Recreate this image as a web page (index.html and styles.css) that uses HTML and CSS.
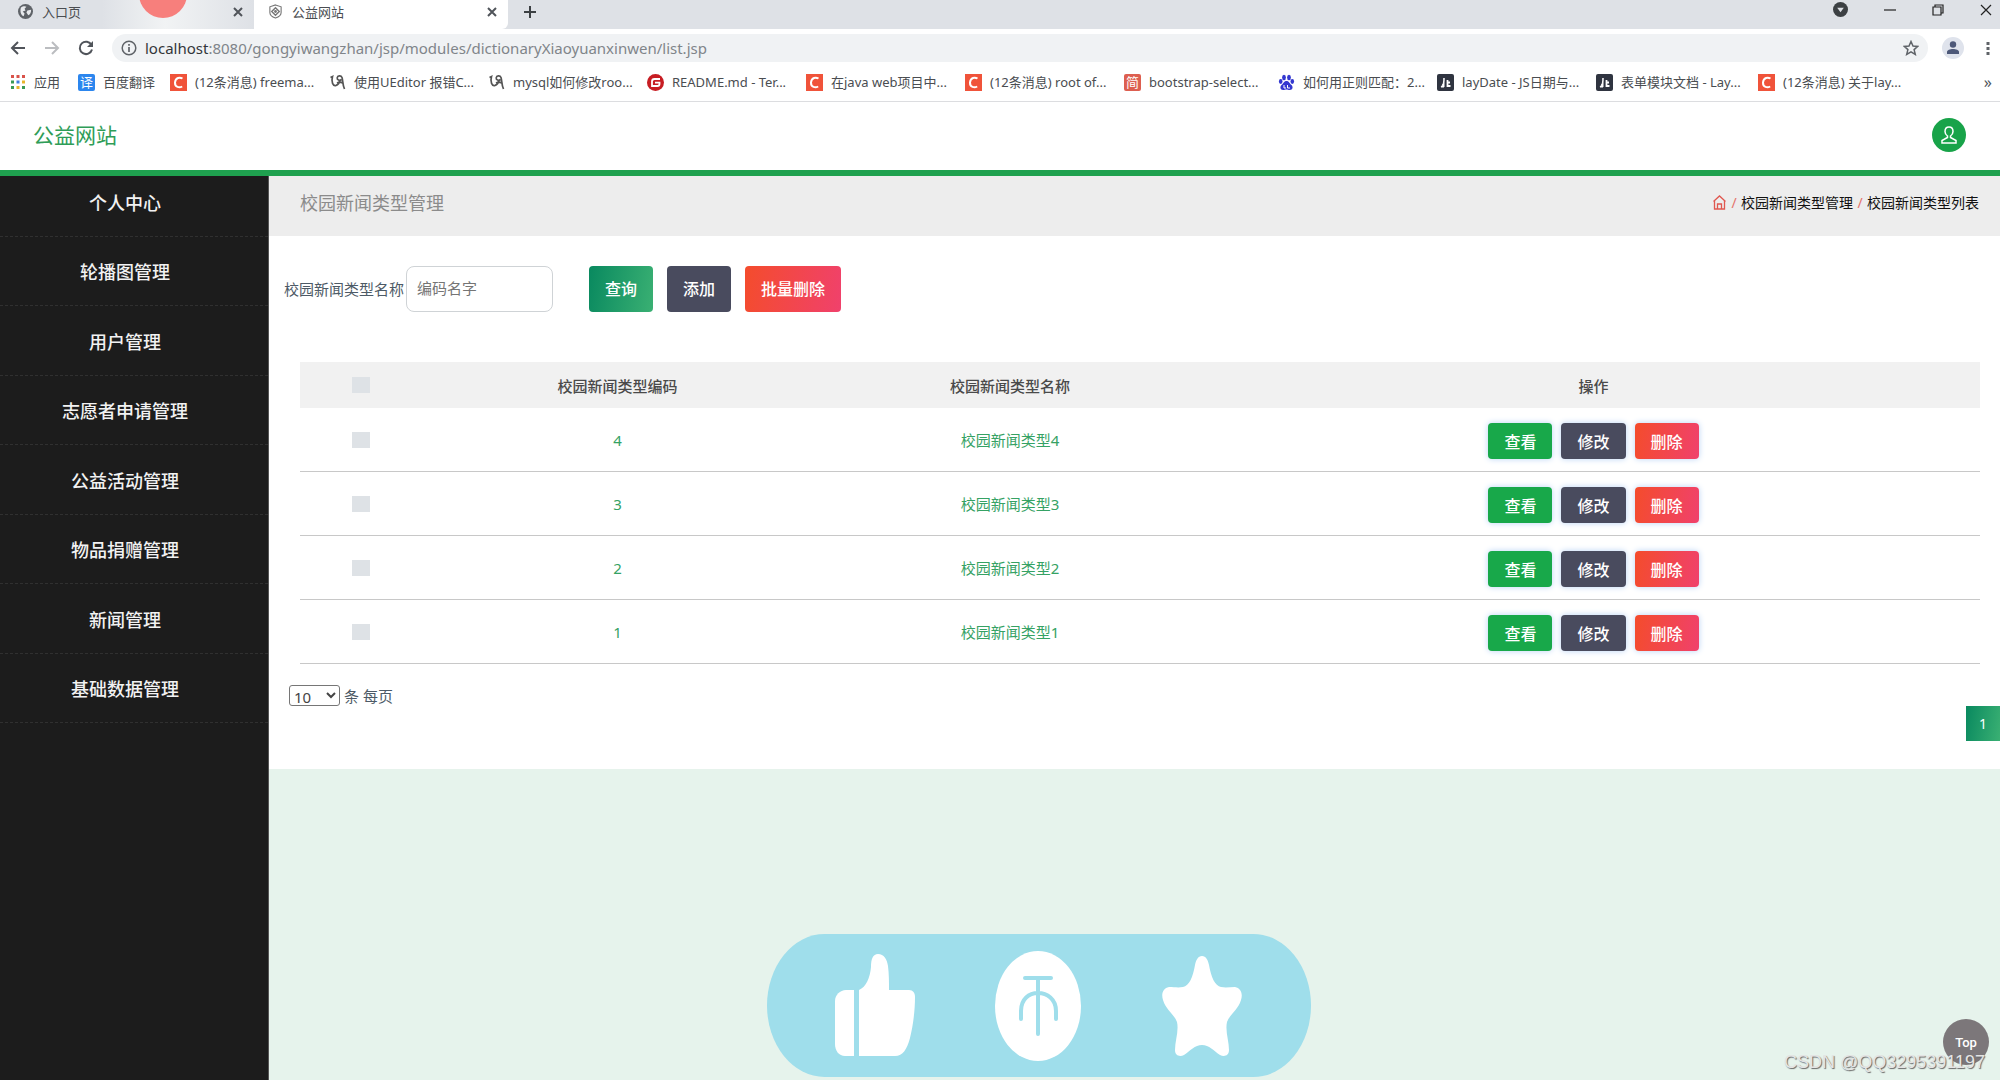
FILE: index.html
```html
<!DOCTYPE html>
<html lang="zh-CN">
<head>
<meta charset="utf-8">
<title>公益网站</title>
<link rel="stylesheet" href="styles.css">
</head>
<body>
<svg class="defs" aria-hidden="true">
  <symbol id="close" viewBox="0 0 12 12"><path d="M2 2l8 8M10 2l-8 8" fill="none" stroke="currentColor" stroke-width="2"/></symbol>
  <symbol id="csdn" viewBox="0 0 17 17"><path fill="#f0533a" d="M0 0h17v17H0z"/><path d="M12.500 4.500C10 3 5.500 3.200 5 8.500c-.2 5 4.500 5.500 7.200 4" fill="none" stroke="#fff" stroke-width="2"/></symbol>
  <symbol id="swirl" viewBox="0 0 17 17"><path d="M1.500 3.500l2-1C2 8 4 12.500 7 11.500c2.500-1 3.500-3 4-5M12.500 5.500c-2 1.500-4.500.5-4.300-1.700C8.500 1.500 12 1 13 3.500c1 3 .5 7 2.500 11.500M8 9c2-1 4-1 5.500 0" fill="none" stroke="#555" stroke-width="1.700"/></symbol>
  <symbol id="lay" viewBox="0 0 17 17"><rect width="17" height="17" rx="2" fill="#2f3440"/><path d="M4 13c2-2 3-5 3-9v9z" fill="#fff" stroke="#fff"/><path d="M10.500 6v7M10.500 8.500h2.500M10.500 12h3" fill="none" stroke="#fff" stroke-width="1.800"/></symbol>
</svg>

<header class="browser">
  <div class="tabs">
    <div class="tab tab-idle">
      <svg class="i15" viewBox="0 0 16 16"><circle cx="8" cy="8" r="8" fill="#5f6368"/><path d="M3 4c2-2 5-2 6-1L7 5l1 2-3 1 2 2-1 3C3 12 2 8 3 4zM10 7l4-1c0 3-1 5-3 6l-2-3z" fill="#e8eaed"/></svg>
      <span class="tab-name">入口页</span>
      <button class="bare" aria-label="关闭"><svg class="i12"><use href="#close"/></svg></button>
    </div>
    <div class="tab tab-on">
      <svg class="i15" viewBox="0 0 16 16"><path d="M8 1l6 2v6c0 3-3 5-6 6-3-1-6-3-6-6V3z" fill="none" stroke="#777" stroke-width="1.200"/><path d="M8 4l4 4-4 4-4-4z" fill="none" stroke="#777" stroke-width="1.500"/><circle cx="8" cy="8" r="1.500" fill="#777"/></svg>
      <span class="tab-name">公益网站</span>
      <button class="bare" aria-label="关闭"><svg class="i12"><use href="#close"/></svg></button>
    </div>
    <button class="bare new-tab" aria-label="新标签页"><svg class="i12" viewBox="0 0 12 12"><path d="M6 0v12M0 6h12" stroke="#3c4043" stroke-width="2"/></svg></button>
    <div class="window-keys">
      <button class="bare" aria-label="标签页搜索"><svg class="i15" viewBox="0 0 16 16"><circle cx="8" cy="8" r="8" fill="#3c4043"/><path d="M4.500 6h7L8 11z" fill="#dee1e6"/></svg></button>
      <button class="bare" aria-label="最小化"><svg class="i12" viewBox="0 0 12 12"><path d="M0 6h12" stroke="#222" stroke-width="1.200"/></svg></button>
      <button class="bare" aria-label="还原"><svg class="i12" viewBox="0 0 12 12"><path d="M1 3h8v8H1zM3 3V1h8v8H9" fill="none" stroke="#222" stroke-width="1.200"/></svg></button>
      <button class="bare" aria-label="关闭窗口"><svg class="i12" viewBox="0 0 12 12"><path d="M1 1l10 10M11 1L1 11" stroke="#222" stroke-width="1.200"/></svg></button>
    </div>
    <span class="dot"></span>
  </div>
  <div class="toolbar">
    <button class="bare" aria-label="后退"><svg class="i16" viewBox="0 0 16 16"><path d="M15 8H2M8 2L2 8l6 6" fill="none" stroke="#50545a" stroke-width="2"/></svg></button>
    <button class="bare" aria-label="前进"><svg class="i16" viewBox="0 0 16 16"><path d="M1 8h13M8 2l6 6-6 6" fill="none" stroke="#bbbdc0" stroke-width="2"/></svg></button>
    <button class="bare" aria-label="刷新"><svg class="i16" viewBox="0 0 16 16"><path d="M13.500 5A6.200 6.200 0 1 0 14 9.500" fill="none" stroke="#50545a" stroke-width="2"/><path d="M15 1v6H9z" fill="#50545a"/></svg></button>
    <div class="address">
      <svg class="i16" viewBox="0 0 16 16"><circle cx="8" cy="8" r="6.800" fill="none" stroke="#5f6368" stroke-width="1.500"/><path d="M8 7v5M8 4v1.700" stroke="#5f6368" stroke-width="1.700"/></svg>
      <span class="url"><b>localhost</b>:8080/gongyiwangzhan/jsp/modules/dictionaryXiaoyuanxinwen/list.jsp</span>
      <button class="bare" aria-label="收藏"><svg class="i16" viewBox="0 0 16 16"><path d="M8 1.500l2 4.500 4.800.4-3.700 3.200 1.200 4.800L8 11.800l-4.300 2.600 1.200-4.800L1.200 6.400 6 6z" fill="none" stroke="#5f6368" stroke-width="1.500"/></svg></button>
    </div>
    <button class="bare profile" aria-label="用户"><svg class="i22" viewBox="0 0 22 22"><circle cx="11" cy="11" r="11" fill="#dfe3ec"/><circle cx="11" cy="7.500" r="3.200" fill="#4d5878"/><path d="M5 17v-2c0-4 12-4 12 0v2z" fill="#4d5878"/></svg></button>
    <button class="bare" aria-label="菜单"><svg class="i16" viewBox="0 0 16 16"><path d="M6.500 2h3v3h-3zM6.500 7h3v3h-3zM6.500 12h3v3h-3z" fill="#5f6368"/></svg></button>
  </div>
  <nav class="bookmarks">
    <a class="mark mark-apps" href="#"><svg class="i16" viewBox="0 0 16 16"><path d="M1 1h3v3H1zM6.500 1h3v3h-3zM12 1h3v3h-3z" fill="#d9534a"/><path d="M1 6.500h3v3H1zM12 12h3v3h-3z" fill="#3a9a55"/><path d="M6.500 6.500h3v3h-3z" fill="#3f7fe0"/><path d="M12 6.500h3v3h-3zM6.500 12h3v3h-3z" fill="#e8b52c"/><path d="M1 12h3v3H1z" fill="#3a9a55"/></svg>应用</a>
    <a class="mark mark-fy" href="#"><span class="glyph blue">译</span>百度翻译</a>
    <a class="mark" href="#"><svg class="i17"><use href="#csdn"/></svg>(12条消息) freema...</a>
    <a class="mark" href="#"><svg class="i17"><use href="#swirl"/></svg>使用UEditor 报错C...</a>
    <a class="mark" href="#"><svg class="i17"><use href="#swirl"/></svg>mysql如何修改roo...</a>
    <a class="mark" href="#"><svg class="i17" viewBox="0 0 17 17"><circle cx="8.500" cy="8.500" r="8.500" fill="#c71d23"/><path d="M13 5H7.500Q5 5 5 7.500V12h5.500Q12.500 12 12.500 10V8.700H8" fill="none" stroke="#fff" stroke-width="1.800"/></svg>README.md - Ter...</a>
    <a class="mark" href="#"><svg class="i17"><use href="#csdn"/></svg>在java web项目中...</a>
    <a class="mark" href="#"><svg class="i17"><use href="#csdn"/></svg>(12条消息) root of...</a>
    <a class="mark mark-short" href="#"><span class="glyph red">简</span>bootstrap-select...</a>
    <a class="mark" href="#"><svg class="i17" viewBox="0 0 17 17"><g fill="#3338d0"><ellipse cx="6" cy="3.500" rx="1.900" ry="2.700"/><ellipse cx="11" cy="3.500" rx="1.900" ry="2.700"/><ellipse cx="2.700" cy="7.500" rx="1.800" ry="2.400"/><ellipse cx="14.300" cy="7.500" rx="1.800" ry="2.400"/><path d="M8.500 7c2.500 0 3 2.500 5 4 2 2 1 5-1.500 5-2 0-2.500-.5-3.500-.5s-2 .5-3.500.5c-2.500 0-3.500-3-1.500-5 2-1.500 2.500-4 5-4z"/></g><path d="M6 11v3h2M9.500 11v3H12" fill="none" stroke="#fff"/></svg>如何用正则匹配：2...</a>
    <a class="mark" href="#"><svg class="i17"><use href="#lay"/></svg>layDate - JS日期与...</a>
    <a class="mark mark-long" href="#"><svg class="i17"><use href="#lay"/></svg>表单模块文档 - Lay...</a>
    <a class="mark" href="#"><svg class="i17"><use href="#csdn"/></svg>(12条消息) 关于lay...</a>
    <button class="bare more" aria-label="更多书签">»</button>
  </nav>
</header>

<header class="site-head">
  <a class="brand" href="#">公益网站</a>
  <button class="bare avatar" aria-label="个人中心"><svg class="i34" viewBox="0 0 34 34"><circle cx="17" cy="17" r="17" fill="#18a349"/><path d="M17 9c-3 0-4 2-4 4.500 0 2 1 3.500 2.500 4.500v1.500L10 22.500V25h14v-2.500l-5.500-3V18c1.500-1 2.500-2.500 2.500-4.500C21 11 20 9 17 9z" fill="none" stroke="#fff" stroke-width="1.500"/></svg></button>
</header>

<div class="app">
  <nav class="sidebar">
    <a href="#">个人中心</a>
    <a href="#">轮播图管理</a>
    <a href="#">用户管理</a>
    <a href="#">志愿者申请管理</a>
    <a href="#">公益活动管理</a>
    <a href="#">物品捐赠管理</a>
    <a href="#">新闻管理</a>
    <a href="#">基础数据管理</a>
  </nav>
  <main class="content">
    <div class="page-bar">
      <h1>校园新闻类型管理</h1>
      <div class="crumbs">
        <a href="#" aria-label="首页"><svg class="i15" viewBox="0 0 15 15"><path d="M1.500 6.500L7.500 1l6 5.500M2.500 6v8h10V6M5.500 14V9h4v5" fill="none" stroke="#e0574f" stroke-width="1.300"/></svg></a>
        <i>/</i><a href="#">校园新闻类型管理</a><i>/</i><span>校园新闻类型列表</span>
      </div>
    </div>
    <section class="panel">
      <form class="search">
        <label for="name">校园新闻类型名称</label>
        <input id="name" type="text" placeholder="编码名字">
        <button type="button" class="btn query">查询</button>
        <button type="button" class="btn slate">添加</button>
        <button type="button" class="btn danger">批量删除</button>
      </form>
      <table class="list">
        <thead>
          <tr><th class="c-tick"><input type="checkbox" aria-label="全选"></th><th class="c-code">校园新闻类型编码</th><th class="c-name">校园新闻类型名称</th><th>操作</th></tr>
        </thead>
        <tbody>
          <tr><td><input type="checkbox" aria-label="选择4"></td><td>4</td><td>校园新闻类型4</td><td><div class="acts"><button class="btn green">查看</button><button class="btn slate">修改</button><button class="btn danger">删除</button></div></td></tr>
          <tr><td><input type="checkbox" aria-label="选择3"></td><td>3</td><td>校园新闻类型3</td><td><div class="acts"><button class="btn green">查看</button><button class="btn slate">修改</button><button class="btn danger">删除</button></div></td></tr>
          <tr><td><input type="checkbox" aria-label="选择2"></td><td>2</td><td>校园新闻类型2</td><td><div class="acts"><button class="btn green">查看</button><button class="btn slate">修改</button><button class="btn danger">删除</button></div></td></tr>
          <tr><td><input type="checkbox" aria-label="选择1"></td><td>1</td><td>校园新闻类型1</td><td><div class="acts"><button class="btn green">查看</button><button class="btn slate">修改</button><button class="btn danger">删除</button></div></td></tr>
        </tbody>
      </table>
      <div class="page-size">
        <select id="size"><option>10</option><option>25</option></select>
        <label for="size">条 每页</label>
      </div>
      <div class="pager"><button class="page">1</button></div>
    </section>
  </main>
</div>

<div class="praise">
  <svg viewBox="0 0 544 143" role="img" aria-label="点赞 投币 收藏">
    <g fill="#fff">
      <path d="M87 56v66h-9c-6 0-10-5-10-12V67c0-6 5-11 11-11z"/>
      <path d="M92 56c7-3 11-12 12-23 0-8 2-13 7-13 6 0 9 5 10 12 1 8 1 16 1 24h20c4 0 6 3 6 7 0 14-2 29-5 41-3 11-7 18-15 18H92z"/>
      <ellipse cx="271" cy="72" rx="43" ry="55"/>
      <path d="M435 22c4 0 6 4 7 9 2 12 6 21 12 22 5 1 9 0 14 0 6 1 8 7 6 13-3 10-11 14-14 22-2 9 2 19 2 28 0 6-5 7-9 5-6-4-11-10-18-10s-12 6-18 10c-4 2-9 1-9-5 0-9 4-19 2-28-3-8-11-12-14-22-2-6 0-12 6-13 5 0 9 1 14 0 6-1 10-10 12-22 1-5 3-9 7-9z"/>
    </g>
    <path d="M258 44h26M271 44v56M254 85v-8c0-12 8-18 17-18s18 6 18 18v8" fill="none" stroke="#9fdeeb" stroke-width="4" stroke-linecap="round"/>
  </svg>
</div>
<button class="to-top">Top</button>
<span class="credit">CSDN @QQ3295391197</span>
</body>
</html>
```
FILE: styles.css
```css
* { box-sizing: border-box; }

body {
  margin: 0;
  min-height: 100vh;
  display: flex;
  flex-direction: column;
  position: relative;
  overflow: hidden;
  background: #fff;
  font-family: "Noto Sans", "Noto Sans CJK SC", sans-serif;
  font-size: 15px;
  color: #4d5a66;
}

a { color: inherit; text-decoration: none; }
button, input, select { font: inherit; }
svg { display: block; flex: none; }

.defs { width: 0; height: 0; position: absolute; }
.i12 { width: 12px; height: 12px; }
.i15 { width: 15px; height: 15px; }
.i16 { width: 16px; height: 16px; }
.i17 { width: 17px; height: 17px; }
.i22 { width: 22px; height: 22px; }
.i34 { width: 34px; height: 34px; }

.bare {
  padding: 0;
  border: 0;
  background: none;
  color: #50545a;
}

/* browser frame */
.browser { border-bottom: 1px solid #dcdde0; }

.tabs {
  position: relative;
  display: flex;
  height: 29px;
  overflow: hidden;
  background: #dee1e6;
  font-size: 13px;
  color: #4a4d51;
}
.tab {
  display: flex;
  align-items: center;
  gap: 9px;
  width: 254px;
  padding: 0 10px 6px 18px;
}
.tab-idle { background: linear-gradient(90deg, #dee1e6 40%, #f1f3f4 65%, #dee1e6); }
.tab-on { padding-left: 14px; background: #fff; border-radius: 0 0 6px 0; }
.tab-name { flex: 1; line-height: 20px; }
.new-tab { padding: 0 16px 6px; }
.window-keys {
  display: flex;
  align-items: center;
  gap: 36px;
  margin-left: auto;
  padding: 0 8px 10px 0;
}
.dot {
  position: absolute;
  left: 139px;
  top: -30px;
  width: 48px;
  height: 48px;
  border-radius: 50%;
  background: #f77f7c;
}

.toolbar {
  display: flex;
  align-items: center;
  gap: 18px;
  height: 38px;
  padding: 0 4px 0 10px;
}
.address {
  flex: 1;
  display: flex;
  align-items: center;
  gap: 8px;
  height: 28px;
  padding: 0 9px;
  border-radius: 14px;
  background: #f0f2f4;
}
.url { flex: 1; font-size: 15px; line-height: 20px; color: #80858a; }
.url b { font-weight: 400; color: #33363a; }
.profile { margin: 0 -2px 0 -4px; }

.bookmarks {
  display: flex;
  align-items: center;
  height: 34px;
  padding: 0 8px 4px 10px;
  font-size: 13px;
  line-height: 20px;
  color: #4a4d51;
  white-space: nowrap;
}
.mark { display: flex; align-items: center; gap: 8px; width: 159px; }
.mark-apps { width: 68px; }
.mark-fy { width: 92px; }
.mark-short { width: 154px; }
.mark-long { width: 162px; }
.more { margin-left: auto; font-size: 16px; }
.glyph {
  width: 17px;
  height: 17px;
  border-radius: 2px;
  line-height: 17px;
  text-align: center;
  color: #fff;
}
.blue { background: #2c86ee; }
.red { background: #dd5f50; }

/* site */
.site-head {
  display: flex;
  align-items: center;
  justify-content: space-between;
  height: 74px;
  padding: 0 34px 2px 33px;
  border-bottom: 6px solid #1fa14f;
}
.brand { padding-bottom: 3px; font-size: 21px; color: #2f9d58; }

.app { flex: 1; display: flex; }

.sidebar {
  width: 269px;
  flex: none;
  border-right: 1px solid #555;
  background: #1c1c1c;
}
.sidebar a {
  display: flex;
  align-items: center;
  justify-content: center;
  height: 69px;
  padding: 2px 18px 0 0;
  border-bottom: 1px dashed #303030;
  font-size: 18px;
  line-height: 28px;
  font-weight: 500;
  color: #f2f2f2;
}
.sidebar a:first-child { height: 61px; padding-top: 0; padding-bottom: 6px; }
.sidebar a:nth-child(odd):not(:first-child) { height: 70px; }

.content { flex: 1; min-width: 0; background: #e6f3ec; }

.page-bar {
  display: flex;
  align-items: center;
  justify-content: space-between;
  height: 60px;
  padding: 0 21px 8px 31px;
  background: #ededed;
}
.page-bar h1 { margin: 0; font-size: 18px; font-weight: 400; color: #8b8b8b; }
.crumbs { display: flex; align-items: center; font-size: 14px; color: #111; }
.crumbs i { width: 14px; text-align: center; font-style: normal; color: #e4736e; }

.panel { padding: 30px 0 28px; background: #fff; }

.search { display: flex; align-items: center; height: 46px; padding-left: 15px; }
.search input {
  width: 147px;
  height: 46px;
  margin: 0 36px 0 2px;
  padding: 0 10px 2px;
  border: 1px solid #cfd3d6;
  border-radius: 8px;
}
.search label { padding-bottom: 2px; }
.search input::placeholder { color: #757575; opacity: 1; }

.btn {
  height: 36px;
  padding: 0 16px;
  border: 0;
  border-radius: 4px;
  font-size: 16px;
  font-weight: 500;
  color: #fff;
}
.search .btn { height: 46px; margin-right: 14px; padding-bottom: 2px; }
.query { background: linear-gradient(100deg, #09895f, #3ab073); }
.green { background: #18a84a; }
.slate { background: #494b5e; }
.danger { background: linear-gradient(100deg, #f44c2c, #f0416c); }

.list {
  width: calc(100% - 51px);
  margin: 50px 20px 0 31px;
  table-layout: fixed;
  border-collapse: separate;
  border-spacing: 0;
  text-align: center;
  color: #35a264;
}
.list th { height: 46px; padding: 0; background: #f1f1f1; font-weight: 500; color: #4a4a4a; }
.list td { height: 64px; padding: 0; border-bottom: 1px solid #c8c8c8; }
.c-tick { width: 122px; }
.c-code { width: 391px; }
.c-name { width: 394px; }
.list input {
  appearance: none;
  display: block;
  width: 18px;
  height: 16px;
  margin: 0 auto;
  background: #dee2e6;
}
.acts { display: flex; justify-content: center; gap: 9px; padding-top: 2px; }
.acts .btn { box-shadow: 0 0 6px #b9d3f5; }

.page-size { display: flex; align-items: center; gap: 4px; margin: 21px 0 0 20px; }
.page-size select {
  width: 51px;
  height: 21px;
  padding: 0;
  border: 1px solid #767676;
  border-radius: 3px;
  background: #fff;
  color: #444;
}

.pager { display: flex; justify-content: flex-end; }
.page {
  width: 34px;
  height: 35px;
  padding: 0;
  border: 0;
  background: linear-gradient(100deg, #09895f, #3ab073);
  font-size: 14px;
  color: #fff;
}

/* overlays */
.praise {
  position: absolute;
  left: 767px;
  bottom: 3px;
  width: 544px;
  height: 143px;
  border-radius: 58px / 72px;
  background: #9fdeeb;
}
.to-top {
  position: absolute;
  right: 11px;
  bottom: 15px;
  width: 46px;
  height: 46px;
  padding: 0;
  border: 0;
  border-radius: 50%;
  background: #7c777a;
  font-family: Roboto, sans-serif;
  font-size: 13px;
  font-weight: 500;
  color: #fff;
}
.credit {
  position: absolute;
  right: 15px;
  bottom: 8px;
  font-family: "Liberation Sans", sans-serif;
  font-size: 18px;
  line-height: 20px;
  color: #e4e4e4;
  text-shadow: 1px 1px 1px #666;
}
```
